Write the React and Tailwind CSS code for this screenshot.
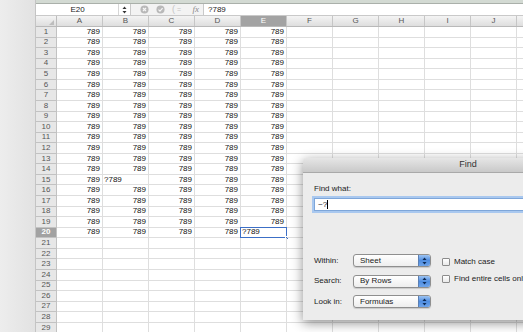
import React from 'react'

const cols = ['A', 'B', 'C', 'D', 'E', 'F', 'G', 'H', 'I', 'J', 'K']

// cell text for columns A..E on rows 1..20
const cellFor = (row, col) => {
    if (row > 20 || col > 4) return null
    if (row === 15 && col === 1) return { text: '?789', left: true }
    if (row === 20 && col === 4) return { text: '?789', left: true, selected: true }
    return { text: '789' }
}

const Stepper = () => (
    <svg width="5" height="8" viewBox="0 0 5 8">
        <path d="M2.5 0.5 L4.5 3 L0.5 3 Z" fill="currentColor" />
        <path d="M2.5 7.5 L4.5 5 L0.5 5 Z" fill="currentColor" />
    </svg>
)

const FormulaBar = () => (
    <div className="h-[12px] shrink-0 flex items-stretch bg-white border-b border-[#c9c9c9] text-[8px] text-[#222]">
        <div className="w-[82px] ml-[1px] flex items-center justify-center border-r border-[#d6d6d6]">E20</div>
        <div className="w-[12px] flex items-center justify-center text-[#333] border-r border-[#c9c9c9]">
            <Stepper />
        </div>
        <div className="w-[73px] flex items-center gap-[7px] pl-[9px] bg-[#f3f3f3] border-r border-[#c9c9c9]">
            <svg width="9" height="9" viewBox="0 0 10 10">
                <circle cx="5" cy="5" r="4.5" fill="#b9b9b9" />
                <path d="M3.3 3.3 L6.7 6.7 M6.7 3.3 L3.3 6.7" stroke="#f6f6f6" strokeWidth="1.3" />
            </svg>
            <svg width="9" height="9" viewBox="0 0 10 10">
                <circle cx="5" cy="5" r="4.5" fill="#b9b9b9" />
                <path d="M2.8 5.2 L4.4 6.8 L7.3 3.4" stroke="#f6f6f6" strokeWidth="1.3" fill="none" />
            </svg>
            <span className="text-[#c4c4c4] text-[9px] leading-none">(<span className="text-[7px] ml-[2px]">=</span></span>
            <span className="ml-auto mr-[4px] font-['Liberation_Serif',serif] italic text-[9px] text-[#8a8a8a] leading-none">fx</span>
        </div>
        <div className="flex-1 flex items-center pl-[4px]">?789</div>
    </div>
)

const HeaderRow = () => (
    <div className="h-[11px] shrink-0 flex bg-gradient-to-b from-[#f4f4f4] to-[#dedede] border-b border-[#b9b9b9] text-[8px] text-[#555]">
        <div className="w-[21px] shrink-0 relative border-r border-[#bdbdbd]">
            <div className="absolute right-[2px] bottom-[1px] w-0 h-0 border-l-[5px] border-l-transparent border-b-[5px] border-b-[#bdbdbd]" />
        </div>
        {cols.map((c, i) => (
            <div
                key={c}
                className={`w-[46px] shrink-0 flex items-center justify-center border-r border-[#c6c6c6] ${i === 4 ? 'bg-[#a3a3a3] text-white' : ''}`}
            >
                {c}
            </div>
        ))}
    </div>
)

const SheetRow = ({ row }) => (
    <div className="h-[10.57px] shrink-0 flex text-[8px] leading-none text-[#111]">
        <div
            className={`w-[21px] shrink-0 flex items-center justify-center border-r border-b border-[#c2c2c2] ${row === 20 ? 'bg-[#a2a2a2] text-white font-bold' : 'bg-[#e7e7e7] text-[#555]'}`}
        >
            {row}
        </div>
        {cols.map((c, i) => {
            const cell = cellFor(row, i)
            return (
                <div
                    key={c}
                    className={`w-[46px] shrink-0 relative flex items-center border-r border-b border-[#dedede] ${cell?.left ? 'justify-start pl-[1px]' : 'justify-end pr-[2px]'}`}
                >
                    {cell?.text}
                    {cell?.selected && (
                        <>
                            <div className="absolute inset-[-1px] border-[1.5px] border-[#3c6fc6]" />
                            <div className="absolute right-[-3px] bottom-[-3px] w-[4px] h-[4px] bg-[#3c6fc6] border border-white" />
                        </>
                    )}
                </div>
            )
        })}
    </div>
)

const Select = ({ value }) => (
    <div className="w-[78px] h-[13px] flex rounded-[3px] border border-[#8f8f8f] bg-gradient-to-b from-white to-[#eeeeee] shadow-[0_1px_1px_rgba(0,0,0,0.15)] overflow-hidden">
        <div className="flex-1 flex items-center pl-[6px] text-[8px] text-[#1a1a1a]">{value}</div>
        <div className="w-[12px] flex items-center justify-center bg-gradient-to-b from-[#9cc3f2] via-[#4f8de0] to-[#6ea4ea] text-[#0d2a55] border-l border-[#5b7fb3]">
            <Stepper />
        </div>
    </div>
)

const Check = ({ label }) => (
    <div className="flex items-center gap-[4px] text-[8px] text-[#1a1a1a] whitespace-nowrap">
        <div className="w-[8px] h-[8px] rounded-[1px] border border-[#8c8c8c] bg-gradient-to-b from-white to-[#e9e9e9]" />
        {label}
    </div>
)

const FindDialog = () => (
    <div className="absolute left-[303px] top-[158px] w-[330px] h-[162px] bg-[#ececec] rounded-t-[4px] shadow-[0_3px_12px_rgba(0,0,0,0.45)] flex flex-col">
        <div className="h-[15px] flex items-center justify-center rounded-t-[4px] bg-gradient-to-b from-[#e6e6e6] to-[#c9c9c9] border-b border-[#a9a9a9] text-[9px] text-[#333]">
            Find
        </div>
        <div className="flex flex-col px-[11px] pt-[11px]">
            <div className="text-[8px] leading-[10px] text-[#1a1a1a]">Find what:</div>
            <div className="mt-[4px] h-[13px] bg-white border border-[#7ea6d9] shadow-[0_0_0_2px_#a9c8ef] flex items-center pl-[3px] text-[8px] text-[#111]">
                ~?<span className="w-px h-[9px] bg-black" />
            </div>
            <div className="mt-[43px] flex gap-[11px]">
                <div className="grid grid-cols-[39px_78px] gap-y-[7.5px] items-center text-[8px] text-[#1a1a1a]">
                    <span>Within:</span>
                    <Select value="Sheet" />
                    <span>Search:</span>
                    <Select value="By Rows" />
                    <span>Look in:</span>
                    <Select value="Formulas" />
                </div>
                <div className="flex flex-col gap-[5px] pt-[2px]">
                    <Check label="Match case" />
                    <Check label="Find entire cells only" />
                </div>
            </div>
        </div>
    </div>
)

export default function App() {
    const rows = Array.from({ length: 30 }, (_, i) => i + 1)
    return (
        <div className="w-[523px] h-[332px] overflow-hidden relative flex bg-[#e8e8e8] font-['Liberation_Sans',Arial,sans-serif]">
            <div className="w-[36px] shrink-0 bg-gradient-to-r from-[#ededed] to-[#e2e2e2] border-r border-[#c4c4c4]" />
            <div className="flex-1 flex flex-col bg-white overflow-hidden">
                <div className="h-[4px] shrink-0 bg-[#d3dad3] border-b border-[#aab0aa]" />
                <FormulaBar />
                <HeaderRow />
                {rows.map(r => <SheetRow key={r} row={r} />)}
            </div>
            <FindDialog />
        </div>
    )
}
